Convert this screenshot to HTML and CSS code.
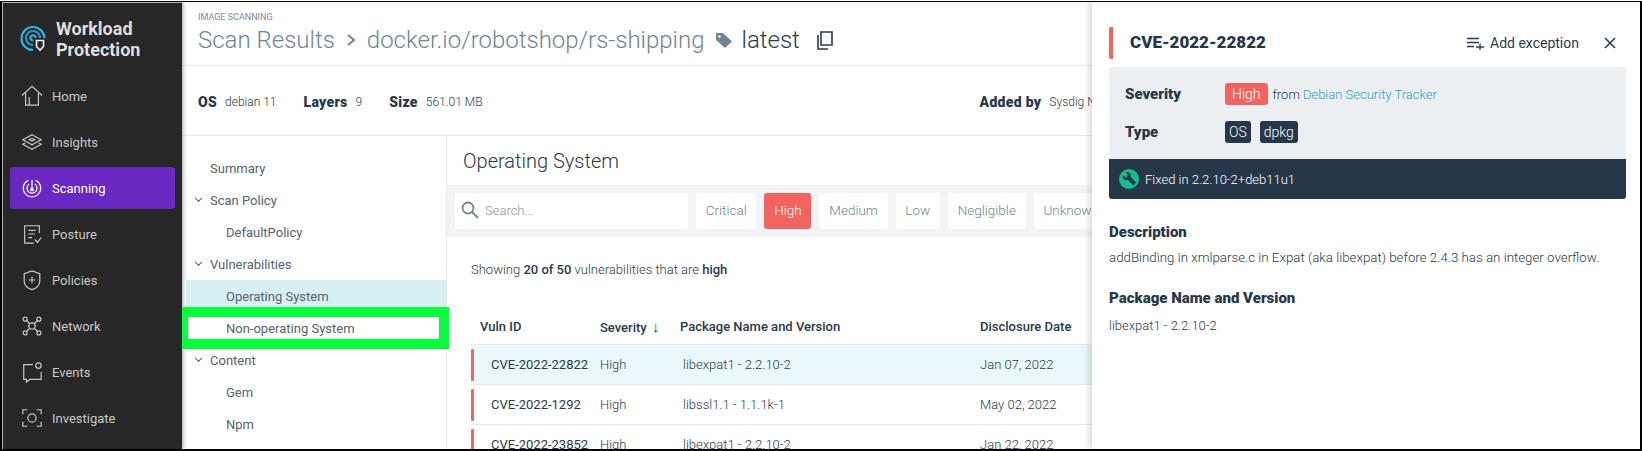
FILE: index.html
```html
<!DOCTYPE html>
<html lang="en">

<head>
  <meta charset="UTF-8">
  <title>Scan Results</title>
  <link rel="stylesheet" href="styles.css">
</head>

<body>
  <div class="frame">
    <nav class="sidebar">
      <div class="logo">
        <svg width="26" height="28" viewBox="0 0 26 28" fill="none" stroke-width="2.2">
          <path d="M13 25 A11.5 11.5 0 1 1 24.5 13" stroke="#2bb5d8"/>
          <path d="M13 20 A7 7 0 1 1 20 13" stroke="#3a8fd0"/>
          <path d="M13 15.5 A2.6 2.6 0 1 1 15.6 13" stroke="#2bb5d8"/>
          <path d="M16.5 15.5h7v6l-3.5 3.5-3.5-3.5z" fill="#272727" stroke="#eee" stroke-width="1.6"/>
        </svg>
        <span>Workload<br>Protection</span>
      </div>
      <a class="nav-item">
        <svg class="nav-icon" viewBox="0 0 24 24"><path d="M1 11.5 12 1.5l11 10M5 9v13h14V9M9 22v-9"/></svg>
        Home
      </a>
      <a class="nav-item">
        <svg class="nav-icon" viewBox="0 0 24 24"><path d="M12 4 22 9.500 12 15 2 9.500zM4.500 13 2 14.500 12 20l10-5.500L19.500 13M9 9.500l3-1.500 3 1.500-3 1.500z"/></svg>
        Insights
      </a>
      <a class="nav-item active">
        <svg class="nav-icon" viewBox="0 0 24 24"><path d="M8 3.500a9.500 9.500 0 1 0 8 0M9 7.500a5.500 5.500 0 1 0 6 0M12 3v10"/><circle cx="12" cy="13.500" r="1.500" fill="#fff"/></svg>
        Scanning
      </a>
      <a class="nav-item">
        <svg class="nav-icon" viewBox="0 0 24 24"><path d="M20 11V3H4v19h10M8 8h8M8 12h7M8 16h4M15 18l3 3 4-5"/></svg>
        Posture
      </a>
      <a class="nav-item">
        <svg class="nav-icon" viewBox="0 0 24 24"><path d="M12 2 20.500 5v8c0 5-4 8-8.500 9.500C7.500 21 3.500 18 3.500 13V5zM12 8.500v7M8.500 12h7"/></svg>
        Policies
      </a>
      <a class="nav-item">
        <svg class="nav-icon" viewBox="0 0 24 24"><circle cx="12" cy="12" r="3.500"/><circle cx="4.500" cy="4.500" r="2.200"/><circle cx="19.500" cy="4.500" r="2.200"/><circle cx="4.500" cy="19.500" r="2.200"/><circle cx="19.500" cy="19.500" r="2.200"/><path d="M6 6l3.500 3.500M18 6l-3.500 3.500M6 18l3.500-3.500M18 18l-3.500-3.500"/></svg>
        Network
      </a>
      <a class="nav-item">
        <svg class="nav-icon" viewBox="0 0 24 24"><path d="M13 4H3v16h3v3l4-3h12v-8"/><circle cx="19" cy="5" r="3"/></svg>
        Events
      </a>
      <a class="nav-item">
        <svg class="nav-icon" viewBox="0 0 24 24"><path d="M7 3H2v5M17 3h5v5M7 21H2v-5M17 21h5v-5"/><circle cx="12" cy="12" r="4.500"/></svg>
        Investigate
      </a>
    </nav>

    <main class="main">
      <header class="page-head">
        <div class="crumb">IMAGE SCANNING</div>
        <div class="title">
          <span>Scan Results</span>
          <svg class="title-sep" width="11" height="14" viewBox="0 0 11 14"><path d="M2 2l6 5-6 5"/></svg>
          <span>docker.io/robotshop/rs-shipping</span>
          <svg class="tag-icon" width="18" height="18" viewBox="0 0 18 18"><path d="M1 2h7l9 8.500L10 17 1 9z"/><circle cx="4.500" cy="5.500" r="1.300" fill="#fff"/></svg>
          <span class="tag">latest</span>
          <svg class="copy-icon" width="16" height="19" viewBox="0 0 16 19"><path d="M1 4v14h10M4 1h11v13H4z"/></svg>
        </div>
      </header>

      <div class="meta">
        <b>OS</b><span class="meta-value">debian 11</span>
        <b>Layers</b><span class="meta-value">9</span>
        <b>Size</b><span class="meta-value">561.01 MB</span>
        <b class="added">Added by</b><span>Sysdig Node Analyzer</span>
      </div>

      <div class="body-row">
        <aside class="tree">
          <div class="tree-row">Summary</div>
          <div class="tree-row"><span class="chev"></span>Scan Policy</div>
          <div class="tree-row sub">DefaultPolicy</div>
          <div class="tree-row"><span class="chev"></span>Vulnerabilities</div>
          <div class="tree-row sub selected">Operating System</div>
          <div class="tree-row sub marked">Non-operating System</div>
          <div class="tree-row"><span class="chev"></span>Content</div>
          <div class="tree-row sub">Gem</div>
          <div class="tree-row sub">Npm</div>
        </aside>

        <section class="results">
          <h2>Operating System</h2>
          <div class="filters">
            <div class="search">
              <svg width="18" height="18" viewBox="0 0 18 18"><circle cx="7" cy="7" r="5.500"/><path d="M11 11l6 6"/></svg>
              Search...
            </div>
            <span class="chip">Critical</span>
            <span class="chip on">High</span>
            <span class="chip">Medium</span>
            <span class="chip">Low</span>
            <span class="chip">Negligible</span>
            <span class="chip">Unknown</span>
          </div>
          <p class="showing">Showing <b>20 of 50</b> vulnerabilities that are <b>high</b></p>
          <table class="vulns">
            <thead>
              <tr><th class="col-id">Vuln ID</th><th class="col-sev">Severity <span class="arrow">↓</span></th><th class="col-pkg">Package Name and Version</th><th class="col-date">Disclosure Date</th></tr>
            </thead>
            <tbody>
              <tr class="current"><td class="col-id"><i></i>CVE-2022-22822</td><td>High</td><td class="pkg">libexpat1 - 2.2.10-2</td><td>Jan 07, 2022</td></tr>
              <tr><td class="col-id"><i></i>CVE-2022-1292</td><td>High</td><td class="pkg">libssl1.1 - 1.1.1k-1</td><td>May 02, 2022</td></tr>
              <tr><td class="col-id"><i></i>CVE-2022-23852</td><td>High</td><td class="pkg">libexpat1 - 2.2.10-2</td><td>Jan 22, 2022</td></tr>
            </tbody>
          </table>
        </section>
      </div>
    </main>

    <aside class="drawer">
      <div class="drawer-head">
        <h3>CVE-2022-22822</h3>
        <span class="add-exception">
          <svg width="17" height="13" viewBox="0 0 17 13"><path d="M0 1.500h12M0 5.500h12M0 9.500h7M9 10h8M13 6.500v6.500"/></svg>
          Add exception
        </span>
        <svg class="close" width="12" height="12" viewBox="0 0 12 12"><path d="M1 1l10 10M11 1 1 11"/></svg>
      </div>
      <div class="summary">
        <div class="summary-body">
          <div class="summary-row">
            <b>Severity</b>
            <span class="pill high">High</span>
            <span class="from">from</span>
            <a class="tracker">Debian Security Tracker</a>
          </div>
          <div class="summary-row">
            <b>Type</b>
            <span class="pill dark">OS</span>
            <span class="pill dark">dpkg</span>
          </div>
        </div>
        <div class="fixed">
          <span class="wrench">
            <svg width="14" height="14" viewBox="0 0 14 14"><path d="M1 3 3.200 5.200 5.200 4.700 5.700 2.700 3.500.500A3.800 3.800 0 0 1 8.800 5l4.400 4.400c.600.700.600 1.600 0 2.300l-.7.700c-.7.600-1.600.600-2.300 0L5.800 8A3.800 3.800 0 0 1 1 3z"/></svg>
          </span>
          Fixed in 2.2.10-2+deb11u1
        </div>
      </div>
      <h4>Description</h4>
      <p class="desc">addBinding in xmlparse.c in Expat (aka libexpat) before 2.4.3 has an integer overflow.</p>
      <h4>Package Name and Version</h4>
      <p class="pkg-value">libexpat1 - 2.2.10-2</p>
    </aside>
  </div>
</body>

</html>
```
FILE: styles.css
```css
* {
  box-sizing: border-box;
}

html, body {
  margin: 0;
  height: 100%;
  overflow: hidden;
}

body {
  font-family: Roboto, sans-serif;
  font-size: 13px;
  color: #2a3a4a;
  background: #fff;
}

/* the screenshot has a 1px light row above its black edge */
body::before {
  content: "";
  position: absolute;
  top: 0;
  left: 0;
  right: 0;
  height: 1px;
  background: #fff;
  z-index: 9;
}

.frame {
  display: flex;
  height: 451px;
  border: 2px solid #000;
  overflow: hidden;
}

/* left nav */
.sidebar {
  width: 180px;
  flex: none;
  background: #272727;
  color: #c9c9c9;
  padding: 0 7px;
  border-top: 1px solid #b5b5b5;
  border-left: 1px solid #b5b5b5;
  box-shadow: 2px 0 3px rgba(0, 0, 0, .25);
  z-index: 2;
}

.logo {
  display: flex;
  align-items: center;
  gap: 10px;
  height: 72px;
  padding-left: 10px;
  font-size: 18px;
  font-weight: 700;
  line-height: 21px;
  color: #dedede;
}

.nav-item {
  display: flex;
  align-items: center;
  gap: 9px;
  height: 42px;
  margin-bottom: 4px;
  padding-left: 11px;
  border-radius: 3px;
  font-size: 13px;
}

.nav-icon {
  width: 22px;
  height: 22px;
  fill: none;
  stroke: #c9c9c9;
  stroke-width: 1.3;
}

.nav-item.active {
  background: #6a28c2;
  color: #fff;
}

.nav-item.active .nav-icon {
  stroke: #fff;
}

/* main column */
.main {
  flex: 1;
  min-width: 0;
  overflow: hidden;
}

.page-head {
  height: 64px;
  padding: 10px 0 0 16px;
  border-bottom: 1px solid #e8eaed;
}

.crumb {
  font-size: 9px;
  color: #7b8a96;
}

.title {
  display: flex;
  align-items: center;
  font-size: 24px;
  font-weight: 300;
  color: #6f8694;
  margin-top: 4px;
  white-space: nowrap;
}

.title-sep {
  margin: 0 10px 0 11px;
  fill: none;
  stroke: #6f8694;
  stroke-width: 2;
}

.tag-icon {
  margin: 0 9px 0 10px;
  fill: #6f8694;
}

.tag {
  color: #2a3a4a;
}

.copy-icon {
  margin-left: 17px;
  fill: none;
  stroke: #2a3a4a;
  stroke-width: 1.6;
}

.meta {
  display: flex;
  align-items: center;
  height: 70px;
  padding: 2px 0 0 16px;
  border-bottom: 1px solid #e8eaed;
  font-weight: 300;
  font-size: 12px;
  white-space: nowrap;
}

.meta b {
  font-size: 14px;
  font-weight: 900;
  letter-spacing: .3px;
  color: #26374a;
  margin-right: 8px;
}

.meta-value {
  margin-right: 27px;
}

.meta .added {
  margin-left: 470px;
}

.body-row {
  display: flex;
  height: 400px;
}

.tree {
  width: 265px;
  flex: none;
  padding-top: 16px;
  border-right: 1px solid #e8eaed;
}

.tree-row {
  display: flex;
  align-items: center;
  height: 32px;
  padding-left: 28px;
  font-size: 13px;
  font-weight: 400;
  color: #55636e;
  position: relative;
}

.tree-row.sub {
  padding-left: 44px;
}

.tree-row.selected {
  margin-left: 4px;
  padding-left: 40px;
  background: #d7f0f4;
}

/* green marker somebody drew on the screenshot */
.tree-row.marked {
  height: 42px;
  margin: -5px -3px -5px -4px;
  padding-left: 38px;
  border: 10px solid #08fd3c;
  background: #fff;
  z-index: 3;
}

.chev {
  position: absolute;
  left: 14px;
  top: 12px;
  width: 5px;
  height: 5px;
  border-right: 1.500px solid #4b5a66;
  border-bottom: 1.500px solid #4b5a66;
  transform: rotate(45deg);
}

.results {
  flex: 1;
  min-width: 0;
}

.results h2 {
  margin: 0;
  height: 49px;
  line-height: 50px;
  padding-left: 16px;
  font-size: 20px;
  font-weight: 300;
  color: #2a3a4a;
}

.filters {
  display: flex;
  gap: 8px;
  background: #f2f4f6;
  height: 52px;
  padding: 8px;
  white-space: nowrap;
  overflow: hidden;
}

.search {
  display: flex;
  align-items: center;
  gap: 6px;
  width: 233px;
  flex: none;
  padding: 0 0 2px 6px;
  background: #fff;
  border-radius: 3px;
  color: #8a98a3;
  font-weight: 300;
}

.search svg {
  fill: none;
  stroke: #6f8694;
  stroke-width: 1.800;
}

.chip {
  display: flex;
  align-items: center;
  flex: none;
  padding: 0 9.750px 2px;
  background: #fff;
  border-radius: 3px;
  font-size: 13.500px;
  font-weight: 300;
  color: #6f8694;
}

.chip.on {
  background: #f2645f;
  color: #fff;
}

.showing {
  margin: 25px 0 0 24px;
  font-size: 13px;
  font-weight: 300;
}

.showing b {
  font-weight: 500;
}

.vulns {
  border-collapse: collapse;
  margin: 33px 0 0 24px;
  table-layout: fixed;
  width: 629px;
  white-space: nowrap;
}

.vulns th {
  height: 34px;
  text-align: left;
  font-size: 13px;
  font-weight: 500;
  padding: 0;
}

.vulns .arrow {
  font-size: 15px;
  font-weight: 400;
  margin-left: 2px;
}

.vulns td {
  height: 40px;
  padding: 0;
  font-size: 13px;
  font-weight: 300;
  border-top: 1px solid #e8eaed;
}

.vulns tr.current td {
  background: #e9f8fa;
}

.vulns .col-id {
  width: 129px;
  padding-left: 9px;
}

.vulns .col-sev {
  width: 80px;
}

.vulns .col-pkg {
  width: 300px;
}

.vulns .col-date {
  width: 120px;
}

.vulns td.col-id {
  padding-left: 20px;
  font-weight: 400;
  position: relative;
}

.vulns td.pkg {
  padding-left: 3px;
}

.vulns td i {
  position: absolute;
  left: 0;
  top: 4px;
  bottom: 3px;
  width: 3px;
  background: #f2645f;
  border-radius: 1px;
}

/* right drawer */
.drawer {
  position: absolute;
  top: 2px;
  right: 2px;
  bottom: 2px;
  width: 548px;
  padding: 0 14px 0 17px;
  background: #fff;
  box-shadow: -3px 0 6px rgba(0, 0, 0, .15);
  z-index: 4;
}

.drawer-head {
  display: flex;
  align-items: center;
  height: 32px;
  margin: 25px 0 8px;
  padding-left: 17px;
  border-left: 4px solid #f2645f;
  border-radius: 2px;
}

.drawer-head h3 {
  margin: 0 0 2px;
  flex: 1;
  font-size: 17px;
  font-weight: 900;
  color: #26374a;
}

.add-exception {
  display: flex;
  align-items: center;
  gap: 6px;
  font-size: 14px;
}

.add-exception svg {
  fill: none;
  stroke: #2a3a4a;
  stroke-width: 1.300;
}

.close {
  margin: 0 10px 0 25px;
  fill: none;
  stroke: #2a3a4a;
  stroke-width: 1.500;
}

.summary {
  border-radius: 3px;
  overflow: hidden;
}

.summary-body {
  background: #ebeff2;
  padding: 16px;
}

.summary-row {
  display: flex;
  align-items: center;
  height: 22px;
  margin-bottom: 16px;
}

.summary-row:last-child {
  margin-bottom: 0;
}

.summary-row b {
  width: 100px;
  font-size: 15px;
  font-weight: 900;
  color: #26374a;
}

.pill {
  display: inline-flex;
  align-items: center;
  height: 22px;
  padding: 0 7px;
  border-radius: 3px;
  font-weight: 300;
  font-size: 14px;
}

.pill.high {
  background: #f2645f;
  color: #fff;
}

.pill.dark {
  background: #26374a;
  color: #fff;
  padding: 0 4px;
  margin-right: 9px;
}

.from {
  margin: 0 3px 0 5px;
  font-weight: 300;
}

.tracker {
  color: #1fa3c4;
  font-weight: 300;
}

.fixed {
  display: flex;
  align-items: center;
  gap: 6px;
  height: 40px;
  padding-left: 10px;
  background: #26374a;
  color: #fff;
  font-weight: 300;
}

.wrench {
  display: flex;
  align-items: center;
  justify-content: center;
  width: 20px;
  height: 20px;
  border-radius: 50%;
  background: #12c08f;
}

.wrench svg {
  fill: #26374a;
}

.drawer h4 {
  margin: 24px 0 9px;
  font-size: 15px;
  font-weight: 900;
  color: #26374a;
}

.drawer p {
  margin: 0 0 1px;
  font-size: 13px;
  font-weight: 300;
}

.drawer p.desc {
  font-size: 13.300px;
}

.drawer p.pkg-value {
  padding-top: 2px;
}
```
